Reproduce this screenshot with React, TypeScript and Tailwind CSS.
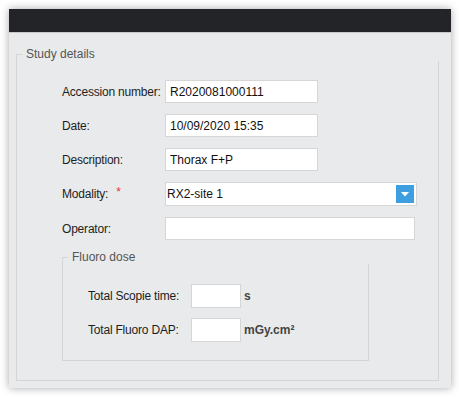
import React from "react";

const labelCls = "w-[103px] shrink-0 text-[12px] tracking-[-0.2px] text-[#1e1e1e]";
const inputCls =
    "h-[23px] border border-[#d6d6d6] bg-white px-[4px] text-[12px] text-[#111] outline-none";

const Row: React.FC<{ label: React.ReactNode; children: React.ReactNode }> = ({ label, children }) => (
    <div className="flex items-center">
        <div className={labelCls}>{label}</div>
        {children}
    </div>
);

// group box whose title hides the top border, only a short tick stays at the left
const GroupBox: React.FC<{ title: string; className?: string; bodyClass?: string; children: React.ReactNode }> = ({
    title,
    className = "",
    bodyClass = "",
    children,
}) => (
    <div className={`flex flex-col ${className}`}>
        <div className="flex h-[14px] shrink-0">
            <div className="w-[6px] shrink-0">
                <div className="mt-[7px] h-[7px] border-l border-t border-[#d4d5d6]" />
            </div>
            <span className="pl-[4px] text-[12px] leading-[14px] text-[#555]">{title}</span>
        </div>
        <div className={`flex-1 border-l border-r border-b border-[#d4d5d6] ${bodyClass}`}>{children}</div>
    </div>
);

const App: React.FC = () => {
    return (
        <div
            className="w-[459px] h-[397px] bg-white p-[9px]"
            style={{ fontFamily: '"Liberation Sans", Arial, sans-serif' }}
        >
            <div className="w-[442px] h-[379px] flex flex-col bg-[#e9eaeb] shadow-[0_0_8px_rgba(0,0,0,0.35)]">
                {/* Title bar */}
                <div className="h-[24px] shrink-0 bg-[#222428] border-b border-[#c9c9c9]" />

                {/* Body */}
                <div className="flex-1 flex flex-col pl-[7px] pr-[12px] pt-[14px] pb-[7px]">
                    <GroupBox title="Study details" className="flex-1" bodyClass="pl-[45px] pt-[19px]">
                        <div className="flex flex-col gap-[11px]">
                            <Row label="Accession number:">
                                <input className={`${inputCls} w-[153px]`} defaultValue="R2020081000111" readOnly />
                            </Row>
                            <Row label="Date:">
                                <input className={`${inputCls} w-[153px]`} defaultValue="10/09/2020 15:35" readOnly />
                            </Row>
                            <Row label="Description:">
                                <input className={`${inputCls} w-[153px]`} defaultValue="Thorax F+P" readOnly />
                            </Row>
                            <Row
                                label={
                                    <span>
                                        Modality:
                                        <span className="ml-[8px] relative top-[-2px] text-[#e53935]">*</span>
                                    </span>
                                }
                            >
                                <div className="h-[24px] w-[252px] flex items-center justify-between border border-[#d6d6d6] bg-white pl-[1px] pr-[2px]">
                                    <span className="text-[12px] text-[#111]">RX2-site 1</span>
                                    <div className="w-[18px] h-[18px] bg-[#3d9fe0] flex items-center justify-center">
                                        <svg width="8" height="5" viewBox="0 0 8 5">
                                            <path d="M0 0h8L4 4.5z" fill="#fff" />
                                        </svg>
                                    </div>
                                </div>
                            </Row>
                            <Row label="Operator:">
                                <input className={`${inputCls} w-[250px]`} defaultValue="" readOnly />
                            </Row>
                        </div>

                        {/* Fluoro dose */}
                        <GroupBox title="Fluoro dose" className="mt-[10px] w-[307px]" bodyClass="pl-[25px] pt-[20px] pb-[18px]">
                            <div className="flex flex-col gap-[10px]">
                                <div className="flex items-center">
                                    <div className={labelCls}>Total Scopie time:</div>
                                    <input className={`${inputCls} w-[50px] h-[24px]`} readOnly />
                                    <span className="ml-[3px] text-[12px] font-bold text-[#444]">s</span>
                                </div>
                                <div className="flex items-center">
                                    <div className={labelCls}>Total Fluoro DAP:</div>
                                    <input className={`${inputCls} w-[50px] h-[24px]`} readOnly />
                                    <span className="ml-[3px] text-[12px] font-bold text-[#444]">mGy.cm²</span>
                                </div>
                            </div>
                        </GroupBox>
                    </GroupBox>
                </div>
            </div>
        </div>
    );
};

export default App;
